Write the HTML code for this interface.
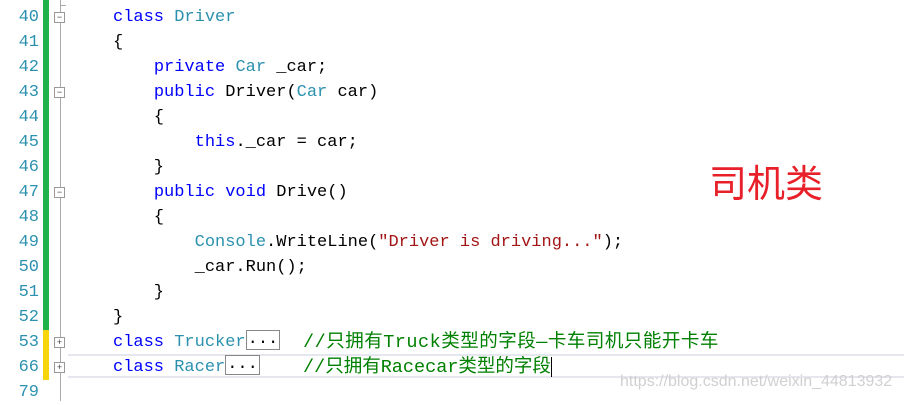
<!DOCTYPE html>
<html><head><meta charset="utf-8"><style>
body{margin:0;width:904px;height:401px;background:#fff;overflow:hidden;position:relative;font-family:"Liberation Mono","Noto Sans CJK SC",monospace;font-size:17px}
.ln{position:absolute;left:0;width:39px;text-align:right;color:#2b91af;font-size:17px;line-height:25px}
.row{position:absolute;left:113px;white-space:pre;line-height:25px;color:#000}
.k{color:#0000ff}.t{color:#2b91af}.c{color:#008000;font-size:18.5px}.s{color:#a31515}
.bar{position:absolute;left:43px;width:6px}
.fold{position:absolute;left:54px;width:9px;height:9px;border:1px solid #999;background:#fff;font:9px/9px "Liberation Sans",sans-serif;text-align:center;color:#444}
.box{display:inline-block;border:1px solid #888;line-height:18px;height:20px;vertical-align:middle;box-sizing:border-box;margin-top:-3px;padding:0 1px}
</style></head><body>
<div class="bar" style="top:0;height:330px;background:#22b24c"></div>
<div class="bar" style="top:330px;height:50px;background:#f8d40a"></div>
<div style="position:absolute;left:60px;top:0;width:1px;height:401px;background:#aaa"></div>
<div style="position:absolute;left:60px;top:5px;width:6px;height:1px;background:#aaa"></div>
<div style="position:absolute;left:68px;top:354px;width:836px;height:24px;border-top:2px solid #e6e6ee;border-bottom:2px solid #e6e6ee;box-sizing:border-box"></div>

<div class="ln" style="top:5px">40</div>
<div class="ln" style="top:30px">41</div>
<div class="ln" style="top:55px">42</div>
<div class="ln" style="top:80px">43</div>
<div class="ln" style="top:105px">44</div>
<div class="ln" style="top:130px">45</div>
<div class="ln" style="top:155px">46</div>
<div class="ln" style="top:180px">47</div>
<div class="ln" style="top:205px">48</div>
<div class="ln" style="top:230px">49</div>
<div class="ln" style="top:255px">50</div>
<div class="ln" style="top:280px">51</div>
<div class="ln" style="top:305px">52</div>
<div class="ln" style="top:330px">53</div>
<div class="ln" style="top:355px">66</div>
<div class="ln" style="top:380px">79</div>

<div class="fold" style="top:12px">−</div>
<div class="fold" style="top:87px">−</div>
<div class="fold" style="top:187px">−</div>
<div class="fold" style="top:337px">+</div>
<div class="fold" style="top:362px">+</div>

<div class="row" style="top:-20px">}</div>
<div class="row" style="top:5px"><span class="k">class</span> <span class="t">Driver</span></div>
<div class="row" style="top:30px">{</div>
<div class="row" style="top:55px">    <span class="k">private</span> <span class="t">Car</span> _car;</div>
<div class="row" style="top:80px">    <span class="k">public</span> Driver(<span class="t">Car</span> car)</div>
<div class="row" style="top:105px">    {</div>
<div class="row" style="top:130px">        <span class="k">this</span>._car = car;</div>
<div class="row" style="top:155px">    }</div>
<div class="row" style="top:180px">    <span class="k">public</span> <span class="k">void</span> Drive()</div>
<div class="row" style="top:205px">    {</div>
<div class="row" style="top:230px">        <span class="t">Console</span>.WriteLine(<span class="s">"Driver is driving..."</span>);</div>
<div class="row" style="top:255px">        _car.Run();</div>
<div class="row" style="top:280px">    }</div>
<div class="row" style="top:305px">}</div>
<div class="row" style="top:330px"><span class="k">class</span> <span class="t">Trucker</span><span class="box">...</span></div>
<div class="row" style="top:355px"><span class="k">class</span> <span class="t">Racer</span><span class="box">...</span></div>
<div class="row c" style="top:330px;left:303px;letter-spacing:0.5px">//只拥有Truck类型的字段—卡车司机只能开卡车</div>
<div class="row c" style="top:355px;left:303px">//只拥有Racecar类型的字段<span style="display:inline-block;width:1px;height:20px;background:#000;vertical-align:middle"></span></div>

<div style="position:absolute;left:709px;top:157px;color:#e8202a;font:38px/48px 'Noto Sans CJK SC',sans-serif">司机类</div>
<div style="position:absolute;left:620px;top:373px;color:#d0d0d0;font:16px/18px 'Liberation Sans',sans-serif">https://blog.csdn.net/weixin_44813932</div>
</body></html>
